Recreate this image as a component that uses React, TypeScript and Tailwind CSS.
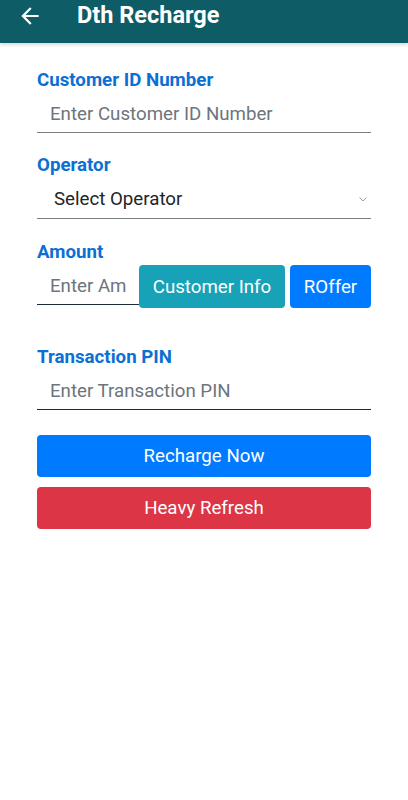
const font = { fontFamily: "Roboto, 'Noto Sans', sans-serif" };

const Label = ({ children }: { children: string }) => (
  <div className="h-5 pt-px text-[18.7px] font-bold leading-5 text-[#0b6fd3]">{children}</div>
);

const TextField = ({ placeholder, dark }: { placeholder: string; dark?: boolean }) => (
  <input
    placeholder={placeholder}
    className={`mt-[3px] box-border block h-[41px] w-full border-b bg-transparent pl-[13px] pt-[3px] text-[18.7px] text-[#212529] outline-none placeholder:text-[#6c757d] ${
      dark ? "border-[#1c2f38]" : "border-[#7a7f85]"
    }`}
  />
);

const App = () => (
  <div className="min-h-[800px] bg-white" style={font}>
    <header className="flex h-[43px] items-center bg-[#0e5d66] pb-[12px] shadow-[0_2px_3px_rgba(0,0,0,0.15)]">
      <svg viewBox="0 0 24 24" className="ml-[17px] h-[26px] w-[26px]" fill="white">
        <path d="M20 11H7.83l5.59-5.59L12 4l-8 8 8 8 1.41-1.41L7.83 13H20v-2z" />
      </svg>
      <h1 className="ml-[34px] text-[23.5px] font-bold leading-none text-white">Dth Recharge</h1>
    </header>

    <main className="px-[37px] pt-[26px]">
      <Label>Customer ID Number</Label>
      <TextField placeholder="Enter Customer ID Number" />

      <div className="mt-[21px]">
        <Label>Operator</Label>
        <div className="mt-[3px] flex h-[42px] items-center justify-between border-b border-[#7a7f85] pl-[17px] pr-[4px] pt-[3px]">
          <span className="text-[18.7px] text-[#212529]">Select Operator</span>
          <svg viewBox="0 0 8 5" className="h-[5px] w-[8px]" fill="none" stroke="#9aa0a6" strokeWidth="1">
            <path d="M0.5 0.5 4 4 7.5 0.5" />
          </svg>
        </div>
      </div>

      <div className="mt-[22px]">
        <Label>Amount</Label>
        <div className="mt-[3px] flex items-start">
          <input
            placeholder="Enter Amount"
            className="box-border block h-[41px] w-[102px] border-b border-[#1c2f38] bg-transparent pl-[13px] pr-[12px] pt-[3px] text-[18.7px] text-[#212529] outline-none placeholder:text-[#6c757d]"
          />
          <button className="mt-px h-[43px] w-[146px] rounded-[4px] bg-[#17a2b8] pt-px text-[18.7px] text-white">
            Customer Info
          </button>
          <button className="ml-[5px] mt-px h-[43px] flex-1 rounded-[4px] bg-[#007bff] pt-px text-[18.7px] text-white">
            ROffer
          </button>
        </div>
      </div>

      <div className="mt-[38px]">
        <Label>Transaction PIN</Label>
        <TextField placeholder="Enter Transaction PIN" dark />
      </div>

      <button className="mt-[25px] block h-[42px] w-full rounded-[4px] bg-[#007bff] text-[18.7px] text-white">
        Recharge Now
      </button>
      <button className="mt-[10px] block h-[42px] w-full rounded-[4px] bg-[#dc3545] text-[18.7px] text-white">
        Heavy Refresh
      </button>
    </main>
  </div>
);

export default App;
